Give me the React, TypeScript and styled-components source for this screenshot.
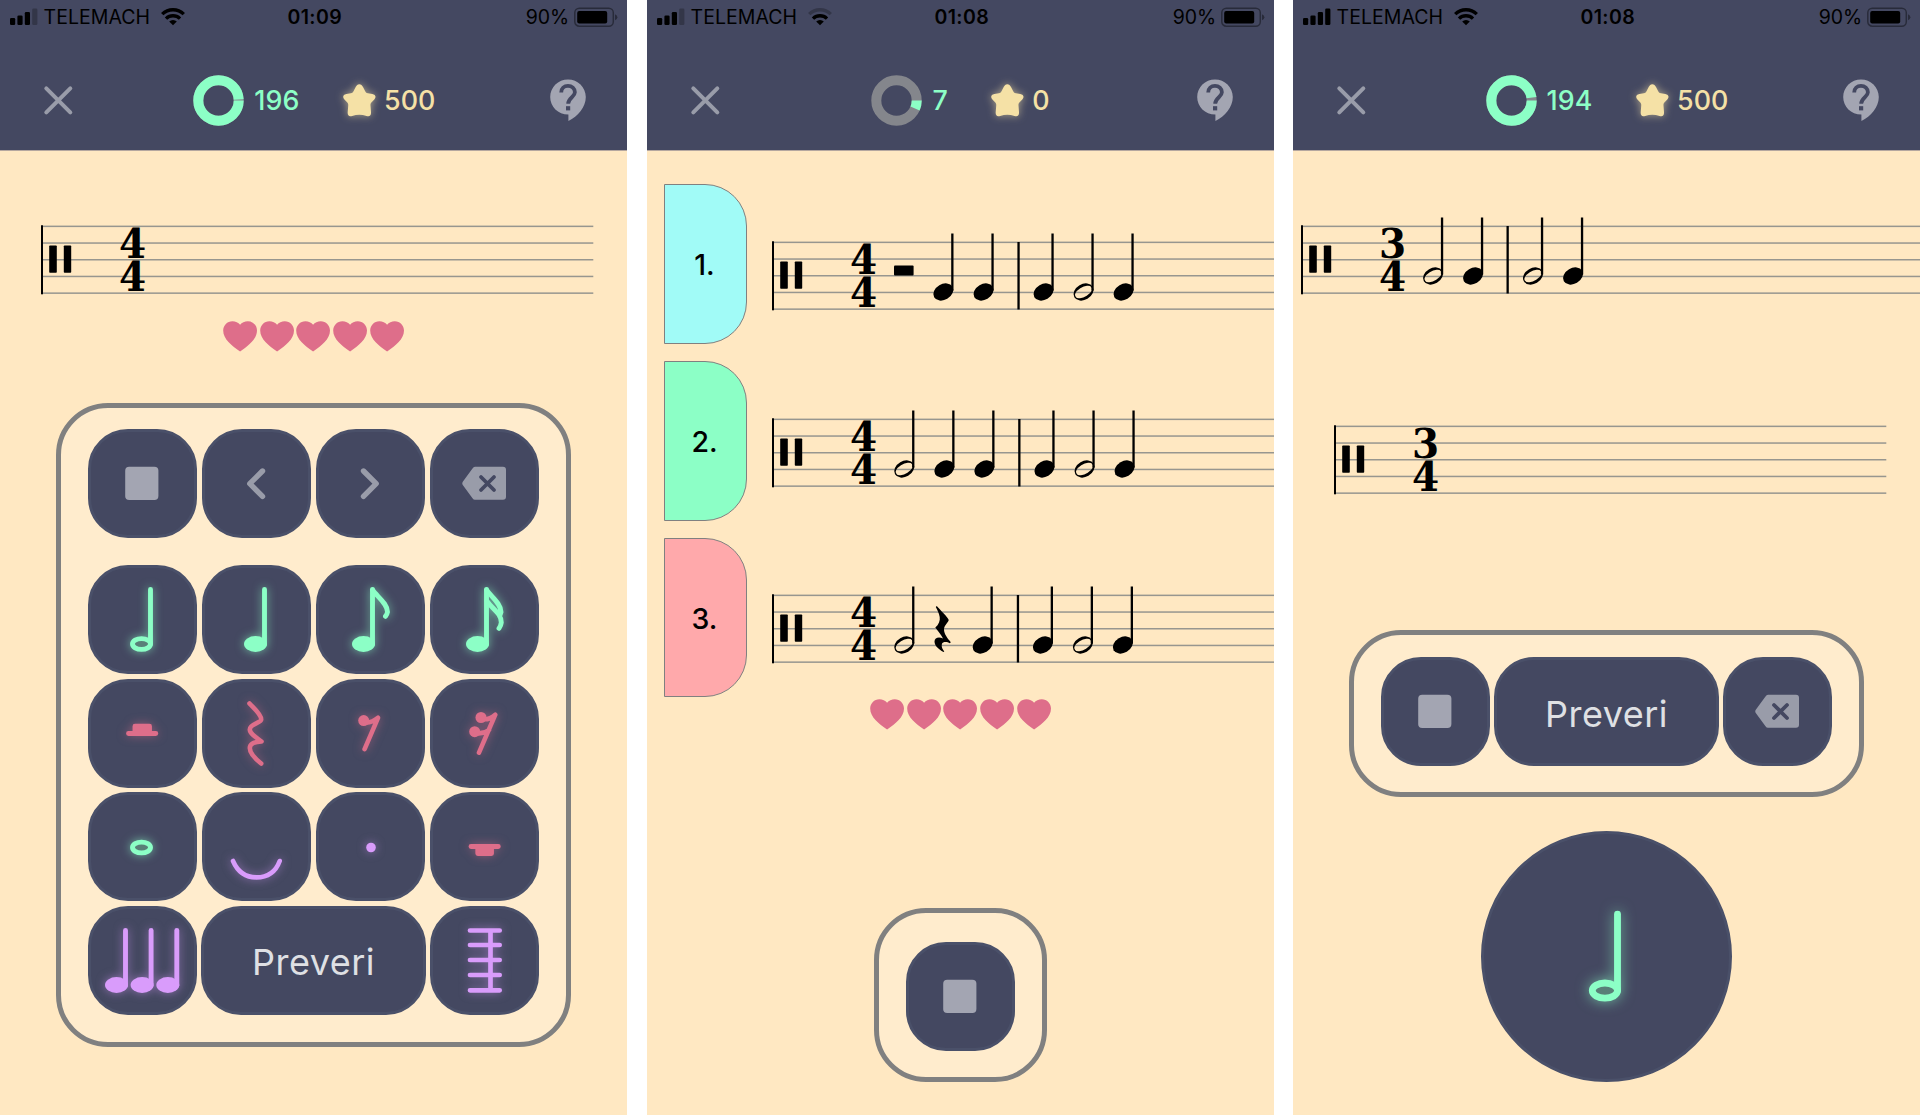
import React from "react";
import styled, { createGlobalStyle } from "styled-components";

const NAVY = "#444861";
const MINT = "#8cffc6";
const ROSE = "#de6e8a";
const LILAC = "#d99cfb";
const GOLD = "#f5e1a6";
const ASH = "#a3a5b2";
const STEEL = "#999ca9";

const GlobalStyle = createGlobalStyle`
  *, *::before, *::after { box-sizing: border-box; }
  body { margin: 0; background: #fff; font-family: Inter, "Liberation Sans", sans-serif; }
  svg { display: block; flex: none; }
`;

const Board = styled.main`
  width: 1920px;
  height: 1115px;
  display: grid;
  grid-template-columns: 647px 646px 627px;
  overflow: hidden;
`;

const Phone = styled.section`
  width: 627px;
  height: 1115px;
  display: flex;
  flex-direction: column;
  background: #ffe8c2;
  overflow: hidden;
`;

const Top = styled.header`
  flex: none;
  height: 151px;
  background: ${NAVY};
  border-bottom: 1px solid #b5a79f;
`;

const StatusBar = styled.div`
  height: 50px;
  padding: 7px 9px 0 9.5px;
  display: grid;
  grid-template-columns: 1fr 60px 1fr;
  align-items: start;
  color: #000;
  font-size: 19.5px;
  line-height: 21px;
`;

const StatusSide = styled.div<{ $end?: boolean }>`
  display: flex;
  justify-content: ${(p) => (p.$end ? "flex-end" : "flex-start")};
`;

const Carrier = styled.span`
  width: 106px;
  margin: 0 11px 0 5.5px;
  letter-spacing: 0.05px;
  white-space: nowrap;
`;

const Clock = styled.span`
  font-weight: 600;
  padding-left: 2px;
  text-align: center;
  letter-spacing: 0.4px;
  white-space: nowrap;
`;

const Percent = styled.span`
  margin-right: 5px;
  letter-spacing: -0.1px;
`;

const Nav = styled.div<{ $shift: number }>`
  height: 100px;
  padding: 0 41px 0 40px;
  display: grid;
  grid-template-columns: ${(p) => 140 + p.$shift}px 119.5px 43.5px 110px 1fr;
  align-items: center;
`;

const Stat = styled.div<{ $color: string; $end?: boolean; $gap: number }>`
  display: flex;
  align-items: center;
  justify-content: ${(p) => (p.$end ? "flex-end" : "flex-start")};
  gap: ${(p) => p.$gap}px;
  color: ${(p) => p.$color};
  font-size: 26.8px;
  font-weight: 450;
  line-height: 32px;
  letter-spacing: 0.1px;
`;

const HelpSlot = styled.div`
  justify-self: end;
`;

const Glow = styled.svg<{ $color?: string; $blur?: number }>`
  overflow: visible;
  filter: ${(p) => (p.$color ? `drop-shadow(0 0 ${p.$blur ?? 5}px ${p.$color})` : "none")};
`;

const Body = styled.div`
  flex: 1;
  display: flex;
  flex-direction: column;
  align-items: center;
`;

const StaffRow = styled.div<{ $left: number; $top: number }>`
  align-self: stretch;
  height: 68px;
  margin-top: ${(p) => p.$top}px;
  padding-left: ${(p) => p.$left}px;
`;

const Score = styled.svg`
  margin-top: -9px;
  overflow: visible;
`;

const HeartRow = styled.div<{ $top: number }>`
  display: flex;
  gap: 2.6px;
  margin-top: ${(p) => p.$top}px;
`;

const Panel = styled.div<{ $top: number; $pad: string }>`
  margin-top: ${(p) => p.$top}px;
  padding: ${(p) => p.$pad};
  border: 5px solid #808080;
  border-radius: 52px;
  background: #ffeccd;
  display: flex;
  flex-direction: column;
  gap: 4.7px;
`;

const KeyRow = styled.div<{ $spaced?: boolean }>`
  display: grid;
  grid-template-columns: repeat(4, 109px);
  gap: 5.2px;
  margin-bottom: ${(p) => (p.$spaced ? "21.9px" : "0")};
`;

const Key = styled.button<{ $wide?: boolean }>`
  grid-column: span ${(p) => (p.$wide ? 2 : 1)};
  width: ${(p) => (p.$wide ? "auto" : "109px")};
  height: 109px;
  margin: 0 ${(p) => (p.$wide ? "-1px" : "0")};
  padding: 0;
  border: 3px solid #4a5069;
  border-radius: 40px;
  background: ${NAVY};
  display: flex;
  align-items: center;
  justify-content: center;
  font-family: inherit;
`;

const CheckLabel = styled.span`
  color: #dfe0e4;
  font-size: 36px;
  line-height: 42px;
  letter-spacing: 0.5px;
  padding-top: 4px;
`;

const RoundKey = styled.button`
  width: 251px;
  height: 251px;
  margin-top: 33.5px;
  padding: 0;
  border: 3px solid #4a5069;
  border-radius: 50%;
  background: ${NAVY};
  display: flex;
  align-items: center;
  justify-content: center;
`;

const Choices = styled.div`
  align-self: stretch;
  margin-top: 33.3px;
  display: flex;
  flex-direction: column;
  gap: 17px;
`;

const Choice = styled.div`
  height: 159.7px;
  padding-left: 17px;
  display: flex;
`;

const ChoiceTab = styled.div<{ $color: string }>`
  flex: none;
  width: 83px;
  margin-right: 25.3px;
  padding: 1px 2px 0 0;
  border: 1.5px solid #808080;
  border-radius: 0 42px 42px 0;
  background: ${(p) => p.$color};
  display: flex;
  align-items: center;
  justify-content: center;
  font-size: 28.5px;
  font-weight: 450;
  color: #000;
`;

const ChoiceStaff = styled.div`
  padding-top: 57.8px;
`;

function Signal({ bars }: { bars: number }) {
  const tops = [18, 15.5, 12, 8.5];
  return (
    <svg width="28.5" height="20" viewBox="0 7 28.5 20">
      {tops.map((t, i) => (
        <rect key={i} x={i * 7.4} y={t} width="5.2" height={25 - t} rx="1.3" fill="#000" opacity={i < bars ? 1 : 0.25} />
      ))}
    </svg>
  );
}

function Wifi({ weak }: { weak?: boolean }) {
  return (
    <svg width="24" height="20" viewBox="0 7 24 20" fill="none" stroke="#000" strokeWidth="3.3">
      <path d="M1.2 14.2A15.3 15.3 0 0 1 22.8 14.2" opacity={weak ? 0.25 : 1} />
      <path d="M5 18.6A10 10 0 0 1 19 18.6" />
      <path d="M12 25.2L8.2 21.6A5.4 5.4 0 0 1 15.8 21.6Z" fill="#000" stroke="none" />
    </svg>
  );
}

function Battery() {
  return (
    <svg width="44" height="20" viewBox="0 7 44 20">
      <rect x="0.8" y="8.2" width="38.5" height="18" rx="4.5" fill="none" stroke="#000" strokeOpacity="0.4" strokeWidth="1.5" />
      <rect x="3.2" y="11" width="30" height="12.4" rx="2" fill="#000" />
      <path d="M41 14.2Q43.4 15 43.4 17.2T41 20.2Z" fill="#000" fillOpacity="0.4" />
    </svg>
  );
}

function Ring({ value }: { value: number }) {
  const c = 2 * Math.PI * 20.2;
  return (
    <svg width="51" height="51" viewBox="0 0 51 51" fill="none" strokeWidth="10">
      <circle cx="25.5" cy="25.5" r="20.2" stroke="#84868c" />
      <circle cx="25.5" cy="25.5" r="20.2" stroke={MINT} strokeDasharray={`${c * value} ${c}`} />
    </svg>
  );
}

function CloseIcon() {
  return (
    <svg width="36" height="36" viewBox="0 0 36 36" stroke={STEEL} strokeWidth="4" strokeLinecap="round">
      <path d="M6.3 6.3L30.3 30.3M30.3 6.3L6.3 30.3" />
    </svg>
  );
}

function StarIcon() {
  return (
    <Glow $color="rgba(245,225,166,.6)" $blur={4} width="33" height="33" viewBox="0 0 33 33" fill={GOLD}>
      <path d="M16.3 .2C18 .2 19.2 1.4 20 3L22.2 7.2C22.8 8.5 23.6 9 24.9 9.2L29.3 9.9C32.6 10.5 33.4 13 31.5 15.3L28.4 18.6C27.5 19.6 27.4 20.5 27.5 21.8L28 28C28.3 31.6 26.6 33 23.5 31.9Q16.3 29.4 9.2 31.9C6.1 33 4.4 31.6 4.7 28L5.2 21.8C5.3 20.5 5.2 19.6 4.3 18.6L1.2 15.3C-.7 13 .1 10.5 3.4 9.9L7.8 9.2C9.1 9 9.9 8.5 10.5 7.2L12.7 3C13.5 1.4 14.7 .2 16.3 .2Z" />
    </Glow>
  );
}

function HelpIcon() {
  return (
    <svg width="36" height="43" viewBox="0 0 36 43">
      <path d="M18 0.5C8.2 .5 .2 8.3 .2 18S8 35.6 18.4 35.6V42C28 37.4 35.8 28 35.8 18C35.8 8.3 27.8 .5 18 .5Z" fill={ASH} />
      <path d="M11.2 13.4C11.2 9.4 14.2 6.8 18 6.8S24.9 9.6 24.9 13.3C24.9 18.2 18.2 18.4 18.2 24.8" fill="none" stroke={NAVY} strokeWidth="3.8" />
      <rect x="16" y="27.2" width="4.2" height="4.2" fill={NAVY} />
    </svg>
  );
}

function Hearts({ top }: { top: number }) {
  return (
    <HeartRow $top={top}>
      {[0, 1, 2, 3, 4].map((i) => (
        <svg key={i} width="34.2" height="31" viewBox="0 0 34.2 31">
          <path d="M17.1 3.8C18.8 1.6 21.7 .2 24.8 .2C30 .2 34 4.4 34 9.6C34 18.2 25.5 24.8 17.1 30.6C8.7 24.8 .2 18.2 .2 9.6C.2 4.4 4.2 .2 9.4 .2C12.5 .2 15.4 1.6 17.1 3.8Z" fill={ROSE} />
        </svg>
      ))}
    </HeartRow>
  );
}

type Mark = { kind: "half" | "quarter" | "bar" | "halfRest" | "quarterRest"; x: number };

function StaffMark({ kind, x }: Mark) {
  if (kind === "bar") return <rect x={x} y="9" width="2.3" height="67.5" />;
  if (kind === "halfRest") return <rect x={x} y="32.6" width="19.6" height="10" rx="1" />;
  if (kind === "quarterRest")
    return (
      <path
        transform={`translate(${x} 20)`}
        d="M2.3 0C5 3.5 14.2 11.8 14.2 14C14.2 16 9.5 19.5 9.5 23.5C9.5 28.5 13.5 32.5 16.3 36.3L15.3 37.2C12.8 35.6 8.3 35.3 7.4 38C6.6 40.5 8 43.4 9.8 45.5L9 46C4 43.5 0 39.8 0 35.6C0 31.5 4.5 30.7 8.5 32.5C6.8 28.8 3.5 25 .8 21.5C4.3 18.5 5.8 14.8 5.2 11C4.6 7.2 2.8 4 1.3 1Z"
      />
    );
  return (
    <g transform={`translate(${x} 59)`}>
      <rect x="17.9" y="-58.5" width="2.3" height="57" />
      {kind === "quarter" ? (
        <ellipse cx="10" cy="0" rx="10.6" ry="7.9" transform="rotate(-30 10 0)" />
      ) : (
        <path
          fillRule="evenodd"
          transform="rotate(-30 10 0)"
          d="M-.6 0A10.6 7.9 0 1 0 20.6 0A10.6 7.9 0 1 0 -.6 0ZM.9 .4A9.2 4.3 0 1 1 19.1 -.4A9.2 4.3 0 1 1 .9 .4Z"
        />
      )}
    </g>
  );
}

function Staff({ beats, marks = [], width }: { beats: number; marks?: Mark[]; width: number }) {
  return (
    <Score width={width} height="78" viewBox={`0 0 ${width} 78`}>
      {[0, 1, 2, 3, 4].map((i) => (
        <rect key={i} x="0" y={8.6 + i * 16.7} width={width} height="1.5" fill="#97968f" />
      ))}
      <rect x="0" y="8.3" width="2" height="69" />
      <rect x="8.2" y="28.5" width="7.6" height="27.3" rx=".8" />
      <rect x="22.8" y="28.5" width="7.4" height="27.3" rx=".8" />
      <g transform="translate(91.6 0) scale(.94 1)" fontFamily='"DejaVu Serif", serif' fontWeight="700" fontSize="41.5" textAnchor="middle">
        <text x="0" y="40.7">{beats}</text>
        <text x="0" y="74.2">4</text>
      </g>
      {marks.map((m, i) => (
        <StaffMark key={i} {...m} />
      ))}
    </Score>
  );
}

type IconName =
  | "stop" | "prev" | "next" | "erase"
  | "half" | "quarter" | "eighth" | "sixteenth"
  | "halfRest" | "quarterRest" | "eighthRest" | "sixteenthRest"
  | "whole" | "tie" | "dot" | "wholeRest"
  | "triplet" | "beam";

const solidNote = (x: number, color: string) => (
  <g key={x}>
    <ellipse cx={x - 9.5} cy="79" rx="11.5" ry="7.9" fill={color} stroke="none" />
    <path d={`M${x - 0.5} 24.5V79.5`} stroke={color} />
  </g>
);

const MINT_GLOW = "rgba(140,255,198,.6)";
const ROSE_GLOW = "rgba(222,110,138,.5)";
const LILAC_GLOW = "rgba(217,156,251,.5)";

const glyphs: Record<IconName, { tint: string; glow?: string; art: React.ReactNode }> = {
  stop: { tint: ASH, art: <rect x="37.2" y="37.8" width="33.2" height="33.2" rx="4" fill={ASH} stroke="none" /> },
  prev: { tint: STEEL, art: <path d="M60.5 42L47.8 54.7L60.5 67.4" strokeWidth="5.4" /> },
  next: { tint: STEEL, art: <path d="M47.5 42L60.2 54.7L47.5 67.4" strokeWidth="5.4" /> },
  erase: {
    tint: STEEL,
    art: (
      <>
        <path d="M42.5 39.4Q43.5 37.7 45 37.7H73Q76 37.7 76 40.7V67.7Q76 70.7 73 70.7H45Q43.5 70.7 42.5 69.2L32.6 55.7Q31.9 54.3 32.6 52.9Z" fill={STEEL} stroke="none" />
        <path d="M51 48L64 61M64 48L51 61" stroke={NAVY} strokeWidth="3.8" />
      </>
    ),
  },
  half: { tint: MINT, glow: MINT_GLOW, art: <><ellipse cx="53.5" cy="79" rx="9" ry="5.4" fill="#598078" /><path d="M62.5 24.5V79" /></> },
  quarter: { tint: MINT, glow: MINT_GLOW, art: solidNote(63, MINT) },
  eighth: { tint: MINT, glow: MINT_GLOW, art: <>{solidNote(57, MINT)}<path d="M56.5 25C61 31.5 71.5 38.5 71.5 47Q71.2 49 69.5 51.3" /></> },
  sixteenth: {
    tint: MINT,
    glow: MINT_GLOW,
    art: <>{solidNote(57, MINT)}<path d="M56.5 25C61 31.5 71 38.5 71 47L70 50M57 36C62 44 71.3 48 71.3 57.5Q71 60.5 69 63.3" /></>,
  },
  halfRest: { tint: ROSE, glow: ROSE_GLOW, art: <path d="M40.5 54.5H67.8M47 52V47.3H61.5V52Z" fill={ROSE} /> },
  quarterRest: { tint: ROSE, glow: ROSE_GLOW, art: <path d="M47.5 24.5C51 28.5 59.2 35 59.2 40.5C59.2 44 47.8 44.5 47.8 50.5C47.8 54.5 54 58.5 59.5 62.5C53 62.8 47.8 64 47.8 69C47.8 74.5 53.5 80 59.2 84.5" strokeWidth="4.6" /> },
  eighthRest: { tint: ROSE, glow: ROSE_GLOW, art: <><circle cx="47.7" cy="41.6" r="5.5" fill={ROSE} stroke="none" /><path d="M48 43.5Q55.5 44.5 62 38.8L48.6 70.2" strokeWidth="4.6" /></> },
  sixteenthRest: {
    tint: ROSE,
    glow: ROSE_GLOW,
    art: <><circle cx="51" cy="38.5" r="5.5" fill={ROSE} stroke="none" /><circle cx="44.7" cy="52.7" r="5.5" fill={ROSE} stroke="none" /><path d="M51 40Q59 41.5 65.3 35.7L49 73.7M45 54Q53 55.5 59 51" strokeWidth="4.6" /></>,
  },
  whole: { tint: MINT, glow: MINT_GLOW, art: <ellipse cx="53.5" cy="55.5" rx="9" ry="5.4" fill="#598078" /> },
  tie: { tint: LILAC, glow: LILAC_GLOW, art: <path d="M31 69C36 80.5 44 85.4 54.3 85.4S73.5 80.5 77.7 69" strokeWidth="4.6" /> },
  dot: { tint: LILAC, glow: LILAC_GLOW, art: <circle cx="55" cy="55.5" r="4.8" fill={LILAC} stroke="none" /> },
  wholeRest: { tint: ROSE, glow: ROSE_GLOW, art: <path d="M41 54.5H68.3M47.8 57V61.5H61.5V57Z" fill={ROSE} /> },
  triplet: { tint: LILAC, glow: LILAC_GLOW, art: <>{[38, 63.6, 89.3].map((x) => solidNote(x, LILAC))}</> },
  beam: { tint: LILAC, glow: LILAC_GLOW, art: <path d="M40 24.5H69.7M40 39H69.7M40 54H69.7M40 69H69.7M40 84.3H69.7M60.5 24.5V84.3" strokeWidth="4.7" /> },
};

function Icon({ name, size = 109 }: { name: IconName; size?: number }) {
  const g = glyphs[name];
  return (
    <Glow $color={g.glow} $blur={(5 * size) / 109} width={size} height={size} viewBox="0 0 109 109" fill="none" stroke={g.tint} strokeWidth="4.9" strokeLinecap="round" strokeLinejoin="round">
      {g.art}
    </Glow>
  );
}

const IconKey = ({ name }: { name: IconName }) => (
  <Key aria-label={name}>
    <Icon name={name} />
  </Key>
);

const CheckKey = () => (
  <Key $wide>
    <CheckLabel>Preveri</CheckLabel>
  </Key>
);

type ScreenProps = {
  time: string;
  bars: number;
  weak?: boolean;
  left: number;
  progress: number;
  stars: number;
  shift?: number;
  children: React.ReactNode;
};

function Screen({ time, bars, weak, left, progress, stars, shift = 0, children }: ScreenProps) {
  return (
    <Phone>
      <Top>
        <StatusBar>
          <StatusSide>
            <Signal bars={bars} />
            <Carrier>TELEMACH</Carrier>
            <Wifi weak={weak} />
          </StatusSide>
          <Clock>{time}</Clock>
          <StatusSide $end>
            <Percent>90%</Percent>
            <Battery />
          </StatusSide>
        </StatusBar>
        <Nav $shift={shift}>
          <CloseIcon />
          <Stat $color={MINT} $gap={10} $end>
            <Ring value={progress} />
            {left}
          </Stat>
          <span />
          <Stat $color={GOLD} $gap={8}>
            <StarIcon />
            {stars}
          </Stat>
          <HelpSlot>
            <HelpIcon />
          </HelpSlot>
        </Nav>
      </Top>
      <Body>{children}</Body>
    </Phone>
  );
}

const choices: { color: string; marks: Mark[] }[] = [
  {
    color: "#a1fbf7",
    marks: [
      { kind: "halfRest", x: 122 }, { kind: "quarter", x: 161.3 }, { kind: "quarter", x: 201.5 },
      { kind: "bar", x: 245.4 }, { kind: "quarter", x: 261.5 }, { kind: "half", x: 301.5 }, { kind: "quarter", x: 341.5 },
    ],
  },
  {
    color: "#8cffc6",
    marks: [
      { kind: "half", x: 122.2 }, { kind: "quarter", x: 162.3 }, { kind: "quarter", x: 202.3 },
      { kind: "bar", x: 246.2 }, { kind: "quarter", x: 262.4 }, { kind: "half", x: 302.5 }, { kind: "quarter", x: 342.5 },
    ],
  },
  {
    color: "#ffa9ab",
    marks: [
      { kind: "half", x: 122.2 }, { kind: "quarterRest", x: 162.5 }, { kind: "quarter", x: 200.6 },
      { kind: "bar", x: 244.8 }, { kind: "quarter", x: 260.8 }, { kind: "half", x: 300.8 }, { kind: "quarter", x: 340.8 },
    ],
  },
];

const keypad: IconName[][] = [
  ["stop", "prev", "next", "erase"],
  ["half", "quarter", "eighth", "sixteenth"],
  ["halfRest", "quarterRest", "eighthRest", "sixteenthRest"],
  ["whole", "tie", "dot", "wholeRest"],
];

export default function App() {
  return (
    <>
      <GlobalStyle />
      <Board>
        <Screen time="01:09" bars={3} left={196} progress={0.985} stars={500}>
          <StaffRow $left={41.2} $top={75}>
            <Staff beats={4} width={552.3} />
          </StaffRow>
          <Hearts top={26.7} />
          <Panel $top={51.3} $pad="21.3px 26.7px 27px">
            {keypad.map((row, i) => (
              <KeyRow key={i} $spaced={i === 0}>
                {row.map((name) => (
                  <IconKey key={name} name={name} />
                ))}
              </KeyRow>
            ))}
            <KeyRow>
              <IconKey name="triplet" />
              <CheckKey />
              <IconKey name="beam" />
            </KeyRow>
          </Panel>
        </Screen>

        <Screen time="01:08" bars={3} weak left={7} progress={0.065} stars={0} shift={1.3}>
          <Choices>
            {choices.map((c, i) => (
              <Choice key={c.color}>
                <ChoiceTab $color={c.color}>{i + 1}.</ChoiceTab>
                <ChoiceStaff>
                  <Staff beats={4} width={502} marks={c.marks} />
                </ChoiceStaff>
              </Choice>
            ))}
          </Choices>
          <Hearts top={1.3} />
          <Panel $top={178.3} $pad="28.7px 27px 26.7px">
            <Key aria-label="stop">
              <Icon name="stop" />
            </Key>
          </Panel>
        </Screen>

        <Screen time="01:08" bars={4} left={194} progress={0.97} stars={500}>
          <StaffRow $left={8.4} $top={75}>
            <Staff
              beats={3}
              width={619}
              marks={[
                { kind: "half", x: 122 }, { kind: "quarter", x: 162 }, { kind: "bar", x: 205.5 },
                { kind: "half", x: 222 }, { kind: "quarter", x: 262 },
              ]}
            />
          </StaffRow>
          <StaffRow $left={41.4} $top={132}>
            <Staff beats={3} width={552.3} />
          </StaffRow>
          <Panel $top={136.4} $pad="21.7px 26.7px 26.3px">
            <KeyRow>
              <IconKey name="stop" />
              <CheckKey />
              <IconKey name="erase" />
            </KeyRow>
          </Panel>
          <RoundKey aria-label="half">
            <Icon name="half" size={152.6} />
          </RoundKey>
        </Screen>
      </Board>
    </>
  );
}
